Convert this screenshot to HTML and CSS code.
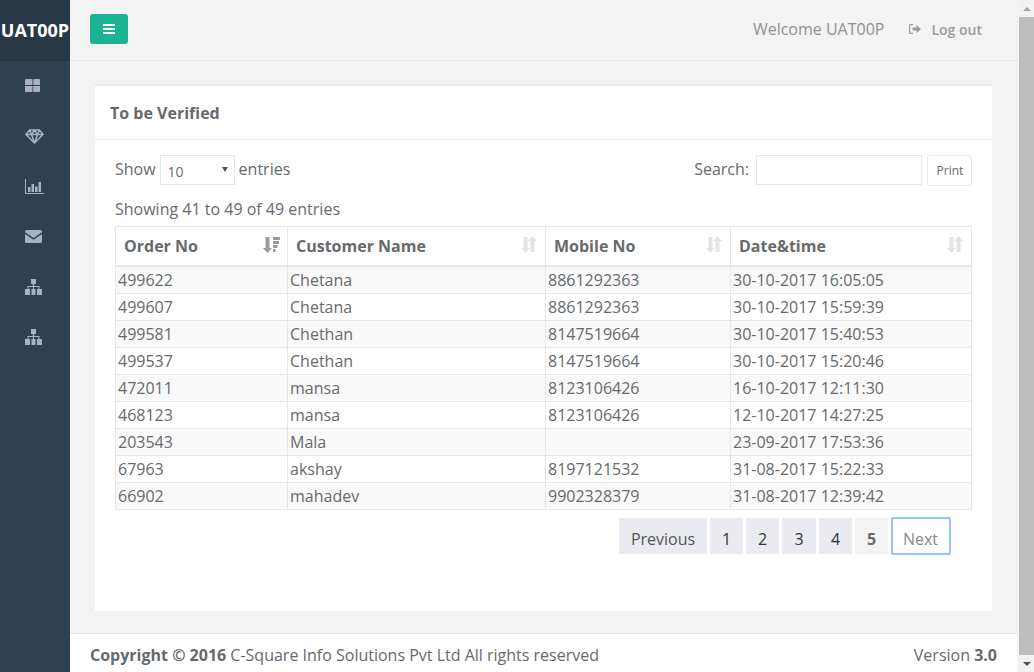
FILE: index.html
```html
<!DOCTYPE html>
<html lang="en">
<head>
    <meta charset="UTF-8">
    <title>To be Verified</title>
    <link rel="stylesheet" href="styles.css">
</head>
<body>
    <svg class="icon-defs" width="0" height="0">
        <symbol id="sitemap" viewBox="0 0 17 16">
            <path d="M6 0h5v5H9.200v2h5.300v3H17v6h-5v-6h1.500V8H9v2h1.500v6h-4v-6H8V8H3.500v2H5v6H0v-6h2.500V7h5.300V5H6z"/>
        </symbol>
        <symbol id="sort" viewBox="0 0 16 17">
            <path d="M2.500 1h4v11H9l-4.500 5L0 12h2.500z"/>
            <path d="M9.500 16V5H7l4.500-5L16 5h-2.500v11z"/>
        </symbol>
    </svg>
    <div class="wrapper">
        <nav class="sidebar">
            <div class="logo">UAT00P</div>
            <a class="side-item">
                <svg width="15" height="13" viewBox="0 0 15 13"><path d="M1 0h5.500a1 1 0 0 1 1 1v4a1 1 0 0 1-1 1H0V1a1 1 0 0 1 1-1zM9 0h5a1 1 0 0 1 1 1v5H8.300V1A1 1 0 0 1 9 0zM0 7h7.500v5a1 1 0 0 1-1 1H1a1 1 0 0 1-1-1zM8.300 7H15v5a1 1 0 0 1-1 1H9a1 1 0 0 1-.7-1z"/></svg>
            </a>
            <a class="side-item">
                <svg class="outline" width="19" height="15" viewBox="0 0 19 15"><path d="M4.500 1h10l3.500 4.500L9.500 14 1 5.500zM1 5.500h17M6.500 5.500l3 8.500 3-8.500M4.500 1l2 4.500L9.500 1l3 4.500 2-4.500"/></svg>
            </a>
            <a class="side-item">
                <svg width="19" height="15" viewBox="0 0 19 15"><path d="M0 0h1v14h18v1H0zM3 8h2.500v5H3zM6.500 5H9v8H6.500zM10 7.500h2.500V13H10zM13.500 3H16v10h-2.500z"/></svg>
            </a>
            <a class="side-item">
                <svg width="17" height="13" viewBox="0 0 17 13"><path d="M1.500 0h14A1.500 1.500 0 0 1 17 1.500v.8L8.500 8 0 2.300v-.8A1.500 1.500 0 0 1 1.500 0zM0 4l8.500 5.700L17 4v7.500a1.500 1.500 0 0 1-1.500 1.500h-14A1.500 1.500 0 0 1 0 11.500z"/></svg>
            </a>
            <a class="side-item">
                <svg width="17" height="16"><use href="#sitemap"/></svg>
            </a>
            <a class="side-item">
                <svg width="17" height="16"><use href="#sitemap"/></svg>
            </a>
        </nav>

        <div class="page">
            <header class="topbar">
                <button class="menu-btn">
                    <svg width="12" height="10" viewBox="0 0 12 10"><path d="M0 0h12v2H0zM0 4h12v2H0zM0 8h12v2H0z"/></svg>
                </button>
                <span class="welcome">Welcome UAT00P</span>
                <a class="logout">
                    <svg width="12" height="10" viewBox="0 0 12 10"><path d="M4 0v1.200H1.500a.4.4 0 0 0-.3.300v7a.4.4 0 0 0 .3.300H4V10H1.500A1.500 1.500 0 0 1 0 8.500v-7A1.500 1.500 0 0 1 1.500 0zM7.500 1L12 5 7.500 9V6.500H3.500v-3h4z"/></svg>
                    Log out
                </a>
            </header>

            <main class="content">
                <section class="card">
                    <h5 class="card-title">To be Verified</h5>
                    <div class="card-body">
                        <div class="table-tools">
                            <label class="length">Show
                                <span class="select-wrap">
                                    <select><option>10</option><option>25</option></select>
                                </span>
                                entries
                            </label>
                            <div class="search-box">
                                <label for="search">Search:</label>
                                <input id="search" type="text">
                                <button class="print-btn">Print</button>
                            </div>
                        </div>
                        <div class="table-info">Showing 41 to 49 of 49 entries</div>
                        <table class="orders">
                            <colgroup>
                                <col class="col-order">
                                <col class="col-name">
                                <col class="col-mobile">
                                <col class="col-date">
                            </colgroup>
                            <thead>
                                <tr>
                                    <th>Order No
                                        <svg class="sort-icon active" width="17" height="17" viewBox="0 0 17 17"><path d="M2.500 1h4v11H9l-4.500 5L0 12h2.500zM10 1h7v3h-7zM10 5h6v3h-6zM10 9h4.500v3H10zM10 13h2.500v3H10z"/></svg>
                                    </th>
                                    <th>Customer Name <svg class="sort-icon" width="16" height="17"><use href="#sort"/></svg></th>
                                    <th>Mobile No <svg class="sort-icon" width="16" height="17"><use href="#sort"/></svg></th>
                                    <th>Date&amp;time <svg class="sort-icon" width="16" height="17"><use href="#sort"/></svg></th>
                                </tr>
                            </thead>
                            <tbody>
                                <tr><td>499622</td><td>Chetana</td><td>8861292363</td><td>30-10-2017 16:05:05</td></tr>
                                <tr><td>499607</td><td>Chetana</td><td>8861292363</td><td>30-10-2017 15:59:39</td></tr>
                                <tr><td>499581</td><td>Chethan</td><td>8147519664</td><td>30-10-2017 15:40:53</td></tr>
                                <tr><td>499537</td><td>Chethan</td><td>8147519664</td><td>30-10-2017 15:20:46</td></tr>
                                <tr><td>472011</td><td>mansa</td><td>8123106426</td><td>16-10-2017 12:11:30</td></tr>
                                <tr><td>468123</td><td>mansa</td><td>8123106426</td><td>12-10-2017 14:27:25</td></tr>
                                <tr><td>203543</td><td>Mala</td><td></td><td>23-09-2017 17:53:36</td></tr>
                                <tr><td>67963</td><td>akshay</td><td>8197121532</td><td>31-08-2017 15:22:33</td></tr>
                                <tr><td>66902</td><td>mahadev</td><td>9902328379</td><td>31-08-2017 12:39:42</td></tr>
                            </tbody>
                        </table>
                        <div class="pagination">
                            <a class="prev">Previous</a>
                            <a class="num">1</a>
                            <a class="num">2</a>
                            <a class="num num-wide">3</a>
                            <a class="num">4</a>
                            <a class="num current">5</a>
                            <a class="next">Next</a>
                        </div>
                    </div>
                </section>
            </main>

            <footer class="footer">
                <div><strong>Copyright &copy; 2016</strong> C-Square Info Solutions Pvt Ltd All rights reserved</div>
                <div>Version <strong>3.0</strong></div>
            </footer>
        </div>

        <div class="scrollbar">
            <div class="arrow arrow-up"></div>
            <div class="thumb"></div>
            <div class="arrow arrow-down"></div>
        </div>
    </div>
</body>
</html>
```

FILE: styles.css
```css
html, body {
    margin: 0;
    height: 100%;
    overflow: hidden;
}

body {
    font-family: "Open Sans", sans-serif;
    font-size: 16px;
    color: #676a6c;
    background-color: #f3f3f4;
}

.icon-defs {
    display: block;
    height: 0;
}

.wrapper {
    display: flex;
    height: 672px;
}

/* sidebar */
.sidebar {
    width: 70px;
    flex-shrink: 0;
    background-color: #2f4050;
}

.logo {
    height: 61px;
    margin-bottom: -0.3px;
    line-height: 60px;
    text-align: center;
    font-size: 18px;
    font-weight: 700;
    color: #fff;
    background-color: #293846;
    white-space: nowrap;
}

.side-item {
    display: flex;
    align-items: center;
    height: 50.3px;
    padding-left: 25px;
    color: #a7b1c2;
}

.side-item svg {
    fill: currentColor;
}

.side-item svg.outline {
    fill: none;
    stroke: currentColor;
    stroke-width: 1.5;
}

/* top bar */
.page {
    flex: 1;
    display: flex;
    flex-direction: column;
    min-width: 0;
}

.topbar {
    display: flex;
    align-items: center;
    height: 61px;
    box-sizing: border-box;
    flex-shrink: 0;
    padding: 0 37px 2px 20px;
    border-bottom: 1px solid #e7eaec;
}

.menu-btn {
    width: 38px;
    height: 30px;
    padding: 0;
    border: none;
    border-radius: 3px;
    background-color: #1ab394;
    display: flex;
    align-items: center;
    justify-content: center;
}

.menu-btn svg {
    fill: #fff;
}

.welcome {
    margin-left: auto;
    color: #8f9193;
}

.logout {
    margin-left: 25px;
    display: flex;
    align-items: center;
    gap: 10px;
    font-size: 14px;
    font-weight: 600;
    color: #999c9e;
}

.logout svg {
    fill: currentColor;
}

/* main card */
.content {
    flex: 1;
    padding: 23px 27px 22px 25px;
}

.card {
    height: 100%;
    box-sizing: border-box;
    background-color: #fff;
    border-top: 2px solid #e7eaec;
}

.card-title {
    margin: 0;
    height: 54px;
    box-sizing: border-box;
    padding: 15px;
    font-size: 16px;
    font-weight: 700;
    line-height: 24px;
    border-bottom: 1px solid #e7eaec;
}

.card-body {
    padding: 15px 20px 0;
}

.table-tools {
    display: flex;
    justify-content: space-between;
    height: 40px;
}

.length {
    display: flex;
    gap: 4px;
    height: 28px;
    align-items: center;
}

.select-wrap {
    position: relative;
    align-self: flex-start;
    height: 30px;
}

.select-wrap::after {
    content: "";
    position: absolute;
    right: 7px;
    top: 12px;
    border-left: 3px solid transparent;
    border-right: 3px solid transparent;
    border-top: 5px solid #555;
    pointer-events: none;
}

.select-wrap select {
    appearance: none;
    display: block;
    width: 75px;
    height: 30px;
    padding: 2px 0 0 7px;
    font-family: inherit;
    font-size: 14px;
    color: #676a6c;
    background-color: #fff;
    border: 1px solid #e5e6e7;
    border-radius: 0;
}

.search-box {
    display: flex;
    align-items: flex-start;
}

.search-box label {
    line-height: 28px;
    margin-right: 7px;
}

.search-box input {
    width: 166px;
    height: 30px;
    box-sizing: border-box;
    border: 1px solid #e5e6e7;
    background-color: #fff;
}

.print-btn {
    width: 45px;
    height: 31px;
    margin-left: 5px;
    padding: 0 0 0 1px;
    font-family: inherit;
    font-size: 12px;
    color: #676a6c;
    background-color: #fff;
    border: 1px solid #e7eaec;
    border-radius: 3px;
}

.table-info {
    height: 31px;
    line-height: 28px;
}

/* table */
.orders {
    width: 856px;
    table-layout: fixed;
    border-collapse: collapse;
}

.col-order { width: 172px; }
.col-name { width: 258px; }
.col-mobile { width: 185px; }
.col-date { width: 241px; }

.orders th,
.orders td {
    border: 1px solid #e7e7e7;
    text-align: left;
}

.orders th {
    position: relative;
    height: 38px;
    padding: 0 8px;
    font-weight: 700;
    border-bottom: 2px solid #e7e7e7;
}

.orders td {
    height: 26px;
    padding: 0 2px;
    line-height: 26px;
}

.orders tbody tr:nth-child(odd) {
    background-color: #f9f9f9;
}

.sort-icon {
    position: absolute;
    right: 8px;
    top: 9px;
    fill: #e4e4e4;
}

.sort-icon.active {
    right: 7px;
    fill: #9a9a9a;
}

/* pagination */
.pagination {
    display: flex;
    gap: 3px;
    margin: 8px 0 0 504px;
    line-height: 36px;
}

.pagination a {
    height: 36px;
    text-align: center;
    color: #333;
    background-color: #e9ebf0;
}

.pagination .prev { width: 88px; line-height: 42px; color: #555; }
.pagination .num { width: 33px; line-height: 42px; }
.pagination .num-wide { width: 34px; }

.pagination .current {
    font-weight: 700;
    color: #676a6c;
    background-color: #f3f3f4;
}

.pagination .next {
    width: 55px;
    height: 34px;
    padding-right: 1px;
    line-height: 40px;
    color: #8a8a8a;
    background-color: #fff;
    border: 2px solid #9cc0fb;
    border-radius: 2px;
    margin-top: -1px;
}

/* footer */
.footer {
    display: flex;
    justify-content: space-between;
    align-items: center;
    flex-shrink: 0;
    height: 39px;
    box-sizing: border-box;
    margin-right: 2px;
    padding: 4px 20px 0;
    background-color: #fff;
    border-top: 1px solid #e7eaec;
}

/* window scrollbar */
.scrollbar {
    width: 15px;
    flex-shrink: 0;
    display: flex;
    flex-direction: column;
    background-color: #f1f1f1;
}

.thumb {
    flex: 1;
    background-color: #bdbdbd;
}

.arrow {
    height: 17px;
    display: flex;
    align-items: center;
    justify-content: center;
}

.arrow::after {
    content: "";
    border-left: 4px solid transparent;
    border-right: 4px solid transparent;
}

.arrow-up::after {
    border-bottom: 4px solid #a3a3a3;
}

.arrow-down::after {
    border-top: 4px solid #505050;
}
```
